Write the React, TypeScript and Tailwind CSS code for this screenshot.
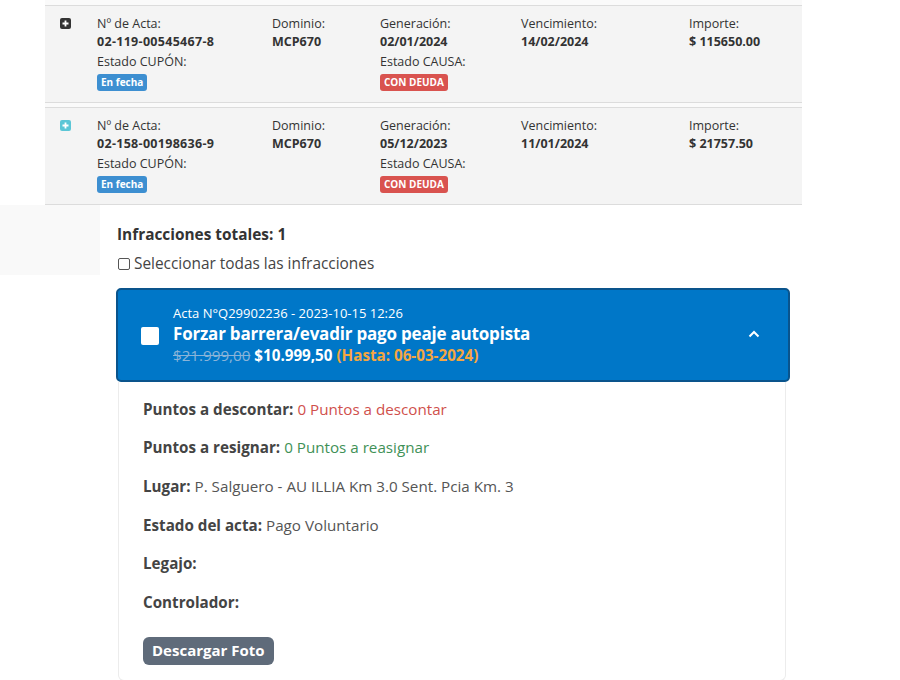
import React from 'react';

type Acta = {
  numero: string;
  dominio: string;
  generacion: string;
  vencimiento: string;
  importe: string;
  active?: boolean;
};

const actas: Acta[] = [
  { numero: '02-119-00545467-8', dominio: 'MCP670', generacion: '02/01/2024', vencimiento: '14/02/2024', importe: '$ 115650.00', active: true },
  { numero: '02-158-00198636-9', dominio: 'MCP670', generacion: '05/12/2023', vencimiento: '11/01/2024', importe: '$ 21757.50' },
];

const PlusSquare: React.FC<{ dark?: boolean }> = ({ dark }) => (
  <svg width="11" height="11" viewBox="0 0 11 11">
    <rect width="11" height="11" rx="2" fill={dark ? '#333333' : '#5bc6d6'} />
    <path d="M5.5 2.5v6M2.5 5.5h6" stroke="#fff" strokeWidth="1.8" />
  </svg>
);

const ActaRow: React.FC<{ acta: Acta }> = ({ acta }) => (
  <div className="flex bg-[#f4f4f4] border-y border-[#dcdcdc] h-[98px] pt-[9px] text-[12.5px] leading-[18px] text-[#333]">
    <div className="w-[52px] pl-[15px] pt-[3px]">
      <PlusSquare dark={acta.active} />
    </div>
    <div className="w-[175px]">
      <div>Nº de Acta:</div>
      <div className="font-bold tracking-[0.3px]">{acta.numero}</div>
      <div className="mt-[2px]">Estado CUPÓN:</div>
      <span className="inline-block mt-[3px] px-[4px] rounded-[3px] bg-[#3d8fd1] text-white text-[10px] font-bold leading-[17px]">En fecha</span>
    </div>
    <div className="w-[108px]">
      <div>Dominio:</div>
      <div className="font-bold">{acta.dominio}</div>
    </div>
    <div className="w-[141px]">
      <div>Generación:</div>
      <div className="font-bold">{acta.generacion}</div>
      <div className="mt-[2px]">Estado CAUSA:</div>
      <span className="inline-block mt-[3px] px-[4px] rounded-[3px] bg-[#d9534f] text-white text-[10px] font-bold leading-[17px]">CON DEUDA</span>
    </div>
    <div className="w-[168px]">
      <div>Vencimiento:</div>
      <div className="font-bold">{acta.vencimiento}</div>
    </div>
    <div className="flex-1">
      <div>Importe:</div>
      <div className="font-bold">{acta.importe}</div>
    </div>
  </div>
);

const Detail: React.FC<{ label: string; value: string; color?: string }> = ({ label, value, color }) => (
  <div className="h-[38.6px] flex items-center">
    <span className="font-bold text-[#444]">{label}</span>
    {value && <span className={`ml-[4px] ${color ?? 'text-[#555]'}`}>{value}</span>}
  </div>
);

export default function App() {
  return (
    <div className="w-[900px] h-[680px] bg-white overflow-hidden font-['Open_Sans',sans-serif]">
      <div className="pt-[5px] w-[757px] ml-[45px] flex flex-col gap-[4px] bg-[#fafafa]">
        {actas.map((a) => (
          <ActaRow key={a.numero} acta={a} />
        ))}
      </div>

      <div className="flex">
        <div className="w-[100px] h-[70px] bg-[#f9f9f9]" />
        <div className="flex-1 pl-[17px] pr-[110px]">
          <div className="pt-[19px] text-[15.4px] font-bold text-[#333] leading-[22px]">Infracciones totales: 1</div>
          <label className="mt-[7px] ml-[1px] flex items-center gap-[4px] text-[15.4px] text-[#444] leading-[22px]">
            <span className="w-[12px] h-[12px] border border-[#555] rounded-[2px] bg-white" />
            Seleccionar todas las infracciones
          </label>

          <div className="mt-[13px] ml-[-1px] w-[674px]">
            <div className="h-[94px] bg-[#0077c8] border-2 border-[#0a548c] rounded-[5px] flex items-center pl-[23px] pr-[28px] text-white">
              <span className="w-[18px] h-[18px] bg-white rounded-[2px] mr-[14px] mt-[1px]" />
              <div className="flex-1 pt-[1px]">
                <div className="text-[13px] leading-[17px]">Acta N°Q29902236 - 2023-10-15 12:26</div>
                <div className="text-[17px] tracking-[-0.2px] font-bold leading-[23px]">Forzar barrera/evadir pago peaje autopista</div>
                <div className="text-[15.2px] leading-[21px]">
                  <span className="line-through text-[#8ab4d8]">$21.999,00</span>{' '}
                  <span className="font-bold">$10.999,50</span>{' '}
                  <span className="font-bold text-[#f5a640]">(Hasta: 06-03-2024)</span>
                </div>
              </div>
              <svg width="12" height="8" viewBox="0 0 12 8" className="mt-[-2px]">
                <path d="M1.5 6.5 6 2l4.5 4.5" fill="none" stroke="#fff" strokeWidth="2" />
              </svg>
            </div>
            <div className="ml-[2px] w-[668px] border border-t-0 border-[#ececec] rounded-b-[6px] px-[24px] pt-[8px] pb-[15px] text-[15.2px]">
              <Detail label="Puntos a descontar:" value="0 Puntos a descontar" color="text-[#d0504c]" />
              <Detail label="Puntos a resignar:" value="0 Puntos a reasignar" color="text-[#3f9157]" />
              <Detail label="Lugar:" value="P. Salguero - AU ILLIA Km 3.0 Sent. Pcia Km. 3" />
              <Detail label="Estado del acta:" value="Pago Voluntario" />
              <Detail label="Legajo:" value="" />
              <Detail label="Controlador:" value="" />
              <button className="mt-[15px] h-[28px] px-[9px] rounded-[6px] bg-[#5f6b7a] text-white font-bold text-[15px]">
                Descargar Foto
              </button>
            </div>
          </div>
        </div>
      </div>
    </div>
  );
}
